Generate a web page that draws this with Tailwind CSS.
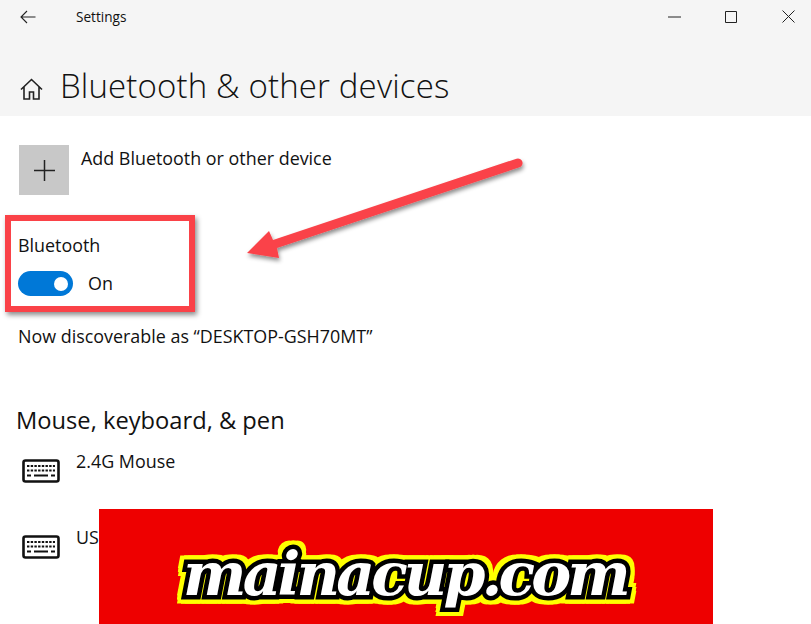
<!DOCTYPE html>
<html lang="en">
<head>
  <meta charset="UTF-8" />
  <meta name="viewport" content="width=device-width, initial-scale=1" />
  <title>Settings</title>
  <script src="https://cdn.jsdelivr.net/npm/@tailwindcss/browser@4"></script>
</head>
<body class="bg-white font-['Open_Sans',sans-serif] text-[#111]">
  <div class="relative w-[811px] h-[624px] overflow-hidden bg-white">

    <!-- header -->
    <header class="h-[116px] bg-[#f5f5f5] flex flex-col">
      <div class="h-[33px] flex items-center">
        <div class="w-[76px] pl-[20px]">
          <svg width="16" height="14" viewBox="0 0 16 14" fill="none" stroke="#222" stroke-width="1.1"><path d="M15.500 7H1M7 1L1 7l6 6"/></svg>
        </div>
        <span class="text-[13.6px] leading-none">Settings</span>
        <div class="ml-auto flex items-center gap-[11px]">
          <div class="w-[46px] flex justify-center">
            <svg width="13" height="2" viewBox="0 0 13 2"><path d="M0 1h13" stroke="#222" stroke-width="1"/></svg>
          </div>
          <div class="w-[46px] flex justify-center">
            <svg width="12" height="12" viewBox="0 0 12 12" fill="none"><path d="M.5.500h11v11H.5z" stroke="#222"/></svg>
          </div>
          <div class="w-[46px] flex justify-center">
            <svg width="13" height="13" viewBox="0 0 13 13" fill="none"><path d="M.5.500l12 12M12.500.500l-12 12" stroke="#222"/></svg>
          </div>
        </div>
      </div>
      <div class="flex items-center mt-[30px] pl-[20px]">
        <svg class="mr-[17px] mt-[6px]" width="23" height="23" viewBox="0 0 23 23" fill="none" stroke="#222" stroke-width="1.6"><path d="M1 11.500L11.500 1.500 22 11.500M4 9v12h5.500v-7h4v7H19V9"/></svg>
        <h1 class="text-[33px] leading-[46px] font-light tracking-[0.15px]">Bluetooth &amp; other devices</h1>
      </div>
    </header>

    <!-- content -->
    <main class="pl-[18px]">
      <div class="flex mt-[29px] ml-[1px]">
        <div class="w-[50px] h-[50px] bg-[#c8c8c8] flex items-center justify-center">
          <svg width="21" height="21" viewBox="0 0 21 21"><path d="M10.500 0v21M0 10.500h21" stroke="#222" stroke-width="1.500"/></svg>
        </div>
        <span class="ml-[12px] text-[17.9px] leading-[26px]">Add Bluetooth or other device</span>
      </div>

      <p class="mt-[37px] text-[17.9px] leading-[26px]">Bluetooth</p>
      <div class="flex items-center mt-[13px] h-[25px]">
        <div class="w-[55px] h-[25px] rounded-full bg-[#0078d7] flex items-center justify-end pr-[5px]">
          <div class="w-[14px] h-[14px] rounded-full bg-white"></div>
        </div>
        <span class="ml-[15px] text-[17.9px]">On</span>
      </div>
      <p class="mt-[27px] text-[17.9px] leading-[26px]">Now discoverable as “DESKTOP-GSH70MT”</p>

      <h2 class="-ml-[2px] mt-[54px] text-[23.700px] leading-[34px]">Mouse, keyboard, &amp; pen</h2>

      <div class="flex mt-[14px] ml-[4px]">
        <svg class="mt-[8px]" width="38" height="24" viewBox="0 0 38 24">
          <rect x="1.500" y="1.500" width="35" height="21" rx="2" fill="none" stroke="#111" stroke-width="2.600"/>
          <path d="M5 7h28M5 11.500h28" stroke="#111" stroke-width="2.200" stroke-dasharray="2.400 1.300"/>
          <path d="M5 16.500h4M12 16.500h14M29 16.500h4" stroke="#111" stroke-width="2.200"/>
        </svg>
        <span class="ml-[16px] text-[17.9px] leading-[24px] -mt-[2px]">2.4G Mouse</span>
      </div>
      <div class="flex mt-[44px] ml-[4px]">
        <svg class="mt-[8px]" width="38" height="24" viewBox="0 0 38 24">
          <rect x="1.500" y="1.500" width="35" height="21" rx="2" fill="none" stroke="#111" stroke-width="2.600"/>
          <path d="M5 7h28M5 11.500h28" stroke="#111" stroke-width="2.200" stroke-dasharray="2.400 1.300"/>
          <path d="M5 16.500h4M12 16.500h14M29 16.500h4" stroke="#111" stroke-width="2.200"/>
        </svg>
        <span class="ml-[16px] text-[17.9px] leading-[24px] -mt-[2px]">US</span>
      </div>
    </main>

    <!-- annotation: red frame -->
    <div class="absolute left-[5px] top-[215px] w-[190px] h-[97px] border-[6px] border-[#fa4248] shadow-[2px_3px_5px_rgba(0,0,0,0.45)]"></div>

    <!-- annotation: arrow -->
    <svg class="absolute left-[240px] top-[150px]" width="290" height="120" viewBox="0 0 290 120">
      <defs>
        <filter id="arrowShadow" x="-10%" y="-20%" width="120%" height="150%">
          <feDropShadow dx="1" dy="3" stdDeviation="2" flood-color="#000" flood-opacity="0.45"/>
        </filter>
      </defs>
      <g filter="url(#arrowShadow)">
        <path d="M7 103L29 81l4 9L276.500 8.700a4.500 4.500 0 0 1 3 8.600L37 98l2 10z" fill="#fa4248"/>
      </g>
    </svg>

    <!-- watermark banner -->
    <div class="absolute left-[99px] top-[509px] w-[614px] h-[115px] bg-[#ee0000] flex items-center justify-center">
      <span class="mt-[14px] ml-[-2px] text-[60px] leading-none font-bold italic font-['DejaVu_Serif',serif] tracking-[-3.900px] text-white [-webkit-text-stroke:9px_#000] [paint-order:stroke_fill] [filter:drop-shadow(4px_0_0_#ffff00)_drop-shadow(-4px_0_0_#ffff00)_drop-shadow(0_4px_0_#ffff00)_drop-shadow(0_-4px_0_#ffff00)]">mainacup.com</span>
    </div>
  </div>
</body>
</html>
